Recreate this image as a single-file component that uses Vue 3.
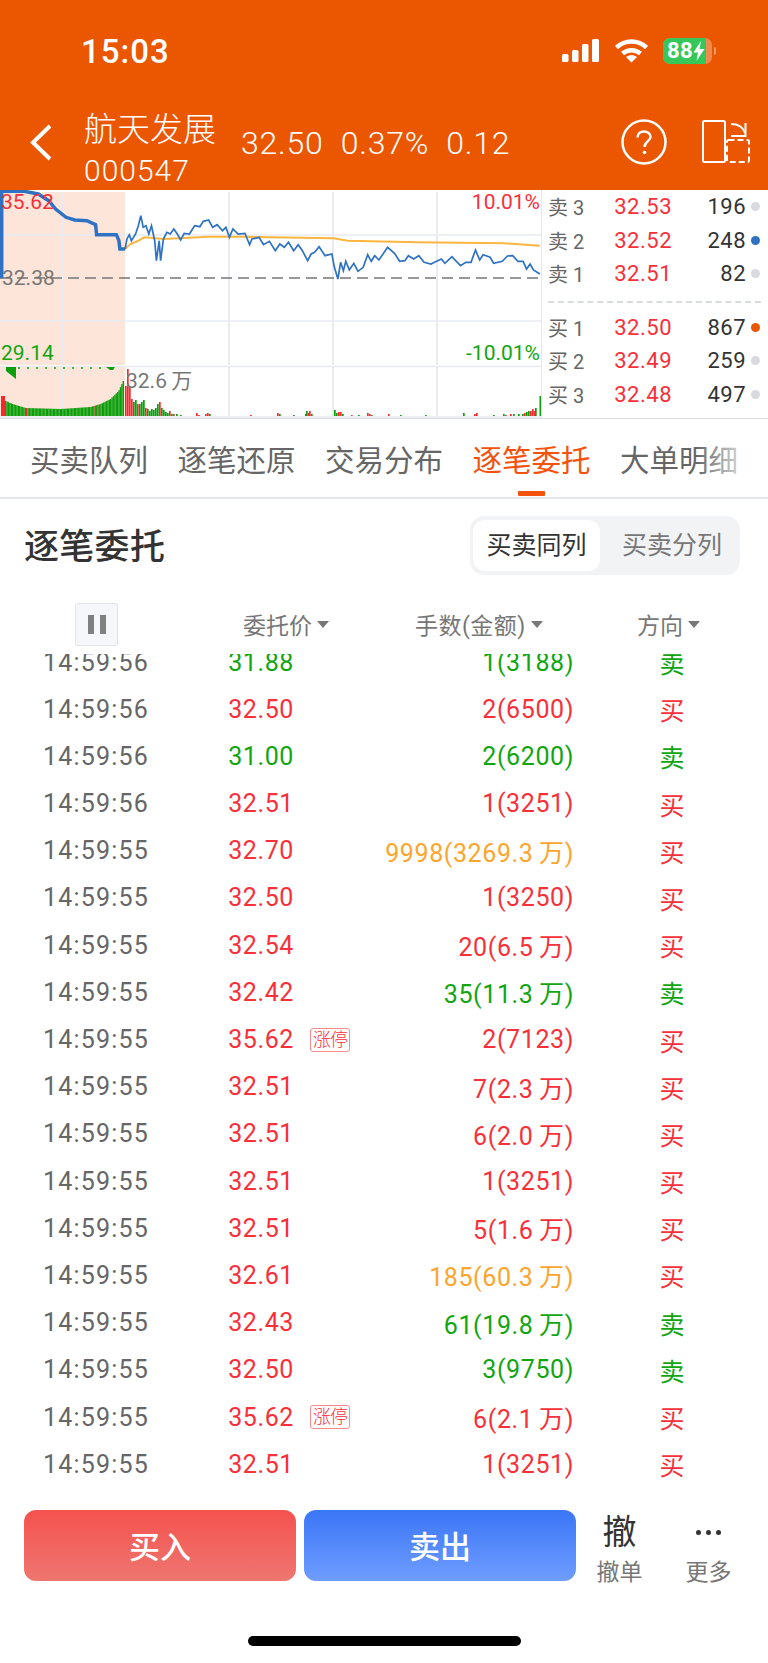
<template>
  <div class="page">
    <header class="top">
      <div class="status">
        <span class="clock">15:03</span>
        <div class="status-icons">
          <svg class="signal" width="38" height="24" viewBox="0 0 38 24">
            <rect x="0" y="15" width="6.5" height="8" rx="1.6" />
            <rect x="10" y="11" width="6.5" height="12" rx="1.6" />
            <rect x="20" y="5" width="6.5" height="18" rx="1.6" />
            <rect x="30" y="0" width="7" height="23" rx="1.6" />
          </svg>
          <svg class="wifi" width="33" height="24" viewBox="0 0 33 24">
            <path d="M1.5 8.5C10 0.500 23 0.500 31.500 8.500" />
            <path d="M7.500 14.500C12.500 10 20.500 10 25.500 14.500" />
            <path class="wifi-dot" d="M16.500 23.500L11 18C14 15.500 19 15.500 22 18Z" />
          </svg>
          <div class="battery">
            <div class="battery-fill"></div>
            <span class="battery-num">88</span>
            <svg class="bolt" width="12" height="20" viewBox="0 0 12 20">
              <path d="M8 0L0.500 11.500H5L3.500 20L11.500 8H6.500Z" />
            </svg>
            <i class="battery-nub"></i>
          </div>
        </div>
      </div>
      <div class="nav">
        <svg class="back" width="22" height="37" viewBox="0 0 22 37">
          <path d="M20 2L3 18.500L20 35" />
        </svg>
        <div class="stock">
          <div class="stock-name">航天发展</div>
          <div class="stock-code">000547</div>
        </div>
        <div class="quote">
          <span>32.50</span>
          <span>0.37%</span>
          <span>0.12</span>
        </div>
        <svg class="help" width="46" height="46" viewBox="0 0 46 46">
          <circle cx="23" cy="23" r="21.500" />
          <path d="M16.500 18.500C16.500 14.500 19.500 12.500 23 12.500C26.500 12.500 29.500 14.800 29.500 18C29.500 22 23.500 22.500 23.500 28" />
          <circle class="help-dot" cx="23.500" cy="33.500" r="1.800" />
        </svg>
        <svg class="switch" width="48" height="44" viewBox="0 0 48 44">
          <rect x="1" y="1" width="22" height="41" rx="1.500" />
          <path d="M29 4C36 4 41 7 43 13" />
          <path d="M29 16H43.500V3" />
          <rect class="dash" x="25" y="20" width="22" height="22" rx="1.500" />
        </svg>
      </div>
    </header>

    <section class="market">
      <div class="chart">
        <svg class="chart-svg" width="541" height="228" viewBox="0 191 541 228">
          <rect x="0" y="193" width="125" height="173" fill="#fde5d9" />
          <rect x="0" y="368" width="125" height="49" fill="#fde5d9" />
          <g stroke="#e8ebf2" stroke-width="1.500">
            <path d="M0 236H541M0 322H541M0 367.500H541M0 418H541" />
            <path stroke-width="2" d="M62.500 193V366M229 193V366M333 193V366M437 193V366M62.500 368V417M229 368V417M333 368V417M437 368V417" />
          </g>
          <rect
            v-for="(bar, i) in bars"
            :key="i"
            :x="bar.x"
            :y="417 - bar.h"
            :width="bar.w"
            :height="bar.h"
            :fill="bar.red ? '#f52a2e' : '#0b9f0b'"
          />
          <path d="M6 368H16V380L11 376L6 372Z" fill="#0b9f0b" />
          <path d="M18 369H104" stroke="#0b9f0b" stroke-width="1.500" stroke-dasharray="2 7" />
          <path d="M106 368H115L113 371H110Z" fill="#0b9f0b" />
          <path d="M0 279H541" stroke="#777" stroke-width="1.300" stroke-dasharray="11 6" />
          <polyline :points="avgLine" fill="none" stroke="#fcb63f" stroke-width="2" />
          <polyline :points="preLine" fill="none" stroke="#2f72c4" stroke-width="3.500" />
          <polyline :points="priceLine" fill="none" stroke="#2f72c4" stroke-width="1.700" />
        </svg>
        <span class="tag tag-high">35.62</span>
        <span class="tag tag-pct-high">10.01%</span>
        <span class="tag tag-base">32.38</span>
        <span class="tag tag-low">29.14</span>
        <span class="tag tag-pct-low">-10.01%</span>
        <span class="tag tag-vol">32.6&#8201;万</span>
      </div>

      <div class="book">
        <div v-for="row in sellRows" :key="row.label" class="book-row">
          <span class="book-label">{{ row.label }}</span>
          <span class="book-price">{{ row.price }}</span>
          <span class="book-vol">{{ row.vol }}</span>
          <i class="book-dot" :class="row.dot"></i>
        </div>
        <div class="book-line"></div>
        <div v-for="row in buyRows" :key="row.label" class="book-row">
          <span class="book-label">{{ row.label }}</span>
          <span class="book-price">{{ row.price }}</span>
          <span class="book-vol">{{ row.vol }}</span>
          <i class="book-dot" :class="row.dot"></i>
        </div>
      </div>
    </section>

    <nav class="tabs">
      <span v-for="tab in tabs" :key="tab" class="tab" :class="{ active: tab === '逐笔委托' }">{{ tab }}</span>
      <div class="tabs-fade"></div>
    </nav>

    <div class="section-head">
      <h2 class="section-title">逐笔委托</h2>
      <div class="segment">
        <span class="segment-item on">买卖同列</span>
        <span class="segment-item">买卖分列</span>
      </div>
    </div>

    <div class="list-head">
      <div class="pause"><i></i><i></i></div>
      <span class="head-price">委托价<b></b></span>
      <span class="head-qty">手数(金额)<b></b></span>
      <span class="head-dir">方向<b></b></span>
    </div>

    <div class="list">
      <div class="list-inner">
        <div v-for="(row, i) in rows" :key="i" class="row">
          <span class="cell-time">{{ row.time }}</span>
          <span class="cell-price" :class="row.price === '31.88' || row.price === '31.00' ? 'green' : 'red'">{{ row.price }}</span>
          <span class="cell-badge"><em v-if="row.price === '35.62'">涨停</em></span>
          <span class="cell-qty" :class="row.color">{{ row.qty.replace('万', '\u2009万') }}</span>
          <span class="cell-dir" :class="row.dir === '买' ? 'red' : 'green'">{{ row.dir }}</span>
        </div>
      </div>
    </div>

    <footer class="actions">
      <button class="btn btn-buy">买入</button>
      <button class="btn btn-sell">卖出</button>
      <div class="action action-cancel">
        <span class="action-main">撤</span>
        <span class="action-text">撤单</span>
      </div>
      <div class="action action-more">
        <span class="more-dots"><i></i><i></i><i></i></span>
        <span class="action-text">更多</span>
      </div>
    </footer>
    <div class="home-wrap"><div class="home"></div></div>
  </div>
</template>

<script setup>
// 坐标按截图放大后的像素记录，这里换算回页面坐标
const toPoints = (list) =>
  list.map(([x, y]) => `${(x / 2.877).toFixed(1)},${(185 + y / 3).toFixed(1)}`).join(' ')

const preLine = toPoints([
  [5, 283], [5, 22], [70, 22], [110, 30], [140, 50], [160, 75], [190, 100], [215, 108], [250, 110],
  [275, 122], [278, 152], [335, 152], [342, 170], [345, 195], [360, 195]
])

const priceLine = toPoints([
  [360, 195], [365, 165], [372, 152], [378, 170], [390, 150], [398, 125], [405, 95], [412, 130], [420, 125],
  [428, 150], [436, 125], [445, 170], [450, 230], [458, 170], [462, 230], [470, 165], [480, 145], [490, 150],
  [500, 135], [510, 150], [520, 168], [530, 148], [545, 150], [560, 125], [575, 128], [585, 112], [600, 108],
  [612, 130], [625, 122], [640, 140], [650, 130], [660, 160], [670, 135], [685, 150], [705, 148], [718, 182],
  [725, 165], [745, 160], [758, 182], [775, 172], [792, 200], [805, 180], [818, 190], [830, 175], [845, 200],
  [858, 182], [870, 200], [885, 230], [895, 210], [905, 205], [918, 188], [935, 215], [955, 210], [962, 250],
  [972, 285], [980, 235], [988, 260], [995, 232], [1005, 258], [1018, 238], [1030, 262], [1045, 250], [1058, 212],
  [1068, 232], [1078, 215], [1090, 228], [1115, 190], [1135, 208], [1150, 232], [1165, 230], [1175, 215],
  [1190, 225], [1205, 215], [1220, 235], [1240, 240], [1250, 235], [1270, 225], [1280, 238], [1300, 218],
  [1325, 245], [1340, 235], [1355, 235], [1368, 198], [1380, 228], [1390, 212], [1410, 220], [1420, 238],
  [1445, 232], [1460, 216], [1475, 215], [1490, 232], [1505, 232], [1515, 255], [1525, 240], [1535, 258], [1553, 270]
])

const avgLine = toPoints([
  [360, 195], [375, 180], [395, 172], [415, 160], [470, 165], [600, 158], [700, 158], [960, 163],
  [1000, 170], [1200, 175], [1450, 178], [1553, 185]
])

// 集合竞价段的成交量，外形是一个 U
const curve = [[5, 402], [12, 405], [25, 409], [60, 410], [90, 408], [100, 405], [110, 400], [118, 392], [124, 379]]
const curveTop = (x) => {
  for (let i = 1; i < curve.length; i++) {
    if (x <= curve[i][0]) {
      const [x0, y0] = curve[i - 1]
      const [x1, y1] = curve[i]
      return y0 + ((y1 - y0) * (x - x0)) / (x1 - x0)
    }
  }
  return 379
}

const bars = [{ x: 1, w: 4, h: 20, red: true }]
for (let x = 5; x < 124; x += 1.4) {
  const red = (x > 25 && x < 27) || (x > 94 && x < 96) || (x > 98.500 && x < 100)
  bars.push({ x, w: 1.400, h: 417 - curveTop(x), red })
}
const sessionBars = [
  [125, 30, 1], [127, 47, 1], [129, 30, 1], [131, 17, 1], [133, 14, 0], [135, 16, 0], [137, 12, 1], [139, 12, 0],
  [141, 14, 0], [143, 16, 0], [145, 8, 1], [147, 7, 0], [149, 5, 0], [151, 7, 0], [153, 6, 0], [155, 8, 0],
  [157, 12, 0], [159, 14, 1], [161, 8, 0], [163, 6, 0], [165, 4, 0], [167, 3, 0], [169, 5, 1], [171, 2, 0],
  [173, 2, 1], [176, 2, 0], [180, 1, 0], [196, 3, 1], [198, 1, 1], [205, 2, 1], [207, 3, 1], [209, 2, 0],
  [250, 1, 1], [277, 3, 1], [279, 2, 0], [293, 1, 0], [305, 2, 0], [306, 5, 0], [308, 3, 1], [309, 5, 1], [311, 2, 0],
  [334, 6, 0], [336, 3, 0], [338, 4, 1], [340, 4, 1], [342, 2, 0], [351, 1, 1], [358, 1, 0], [367, 3, 1], [369, 2, 1],
  [371, 1, 0], [388, 2, 1], [400, 1, 0], [425, 1, 0], [463, 3, 0], [474, 2, 1], [476, 3, 1], [493, 1, 0],
  [503, 2, 0], [505, 1, 1], [510, 2, 1], [513, 2, 0], [518, 2, 0], [522, 2, 0], [524, 3, 1], [526, 4, 0],
  [528, 5, 0], [530, 5, 1], [532, 7, 1], [534, 5, 1], [535, 8, 0], [539.500, 20, 0]
]
sessionBars.forEach(([x, h, red]) => bars.push({ x, w: 1.700, h, red: !!red }))

const sellRows = [
  { label: '卖 3', price: '32.53', vol: '196', dot: '' },
  { label: '卖 2', price: '32.52', vol: '248', dot: 'blue' },
  { label: '卖 1', price: '32.51', vol: '82', dot: '' }
]
const buyRows = [
  { label: '买 1', price: '32.50', vol: '867', dot: 'orange' },
  { label: '买 2', price: '32.49', vol: '259', dot: '' },
  { label: '买 3', price: '32.48', vol: '497', dot: '' }
]

const tabs = ['买卖队列', '逐笔还原', '交易分布', '逐笔委托', '大单明细']

const rows = [
  { time: '14:59:56', price: '31.88', qty: '1(3188)', color: 'green', dir: '卖' },
  { time: '14:59:56', price: '32.50', qty: '2(6500)', color: 'red', dir: '买' },
  { time: '14:59:56', price: '31.00', qty: '2(6200)', color: 'green', dir: '卖' },
  { time: '14:59:56', price: '32.51', qty: '1(3251)', color: 'red', dir: '买' },
  { time: '14:59:55', price: '32.70', qty: '9998(3269.3万)', color: 'orange', dir: '买' },
  { time: '14:59:55', price: '32.50', qty: '1(3250)', color: 'red', dir: '买' },
  { time: '14:59:55', price: '32.54', qty: '20(6.5万)', color: 'red', dir: '买' },
  { time: '14:59:55', price: '32.42', qty: '35(11.3万)', color: 'green', dir: '卖' },
  { time: '14:59:55', price: '35.62', qty: '2(7123)', color: 'red', dir: '买' },
  { time: '14:59:55', price: '32.51', qty: '7(2.3万)', color: 'red', dir: '买' },
  { time: '14:59:55', price: '32.51', qty: '6(2.0万)', color: 'red', dir: '买' },
  { time: '14:59:55', price: '32.51', qty: '1(3251)', color: 'red', dir: '买' },
  { time: '14:59:55', price: '32.51', qty: '5(1.6万)', color: 'red', dir: '买' },
  { time: '14:59:55', price: '32.61', qty: '185(60.3万)', color: 'orange', dir: '买' },
  { time: '14:59:55', price: '32.43', qty: '61(19.8万)', color: 'green', dir: '卖' },
  { time: '14:59:55', price: '32.50', qty: '3(9750)', color: 'green', dir: '卖' },
  { time: '14:59:55', price: '35.62', qty: '6(2.1万)', color: 'red', dir: '买' },
  { time: '14:59:55', price: '32.51', qty: '1(3251)', color: 'red', dir: '买' }
]
</script>

<style>
body {
  margin: 0;
  background: #fff;
}
</style>

<style scoped>
.page {
  width: 768px;
  height: 1663px;
  overflow: hidden;
  display: flex;
  flex-direction: column;
  background: #fff;
  font-family: Roboto, "Noto Sans CJK SC", sans-serif;
  color: #333;
}

/* 顶部 */
.top {
  height: 190px;
  background: #eb5600;
  color: #fff;
  flex-shrink: 0;
}
.status {
  height: 104px;
  box-sizing: border-box;
  padding: 33px 56px 0 81px;
  display: flex;
  justify-content: space-between;
}
.clock {
  font-size: 33px;
  line-height: 38px;
  font-weight: 500;
  letter-spacing: 1px;
}
.status-icons {
  display: flex;
  align-items: flex-start;
  padding-top: 5px;
}
.signal {
  fill: #fff;
  margin: 1px 15px 0 0;
}
.wifi {
  margin: 1px 15px 0 0;
  fill: none;
  stroke: #fff;
  stroke-width: 4.500;
}
.wifi-dot {
  fill: #fff;
  stroke: none;
}
.battery {
  position: relative;
  width: 49px;
  height: 26px;
  margin-top: 0;
  border-radius: 7px;
  overflow: visible;
  background: rgba(255, 255, 255, 0.3);
  display: flex;
  align-items: center;
  padding-left: 4px;
  box-sizing: border-box;
}
.battery-fill {
  position: absolute;
  left: 0;
  top: 0;
  bottom: 0;
  width: 43px;
  background: #35c759;
  border-radius: 7px 0 0 7px;
}
.battery-num {
  position: relative;
  font-size: 22px;
  font-weight: 700;
  letter-spacing: 0.5px;
  line-height: 26px;
}
.bolt {
  position: relative;
  fill: #fff;
  margin-left: 0;
}
.battery-nub {
  position: absolute;
  right: -4px;
  top: 9px;
  width: 2px;
  height: 8px;
  border-radius: 0 2px 2px 0;
  background: rgba(255, 255, 255, 0.4);
}

.nav {
  height: 86px;
  display: flex;
  align-items: flex-start;
  position: relative;
}
.back {
  fill: none;
  stroke: #fff;
  stroke-width: 4;
  margin: 20px 0 0 30px;
  flex-shrink: 0;
}
.stock {
  margin-left: 32px;
  width: 157px;
  flex-shrink: 0;
  font-weight: 300;
}
.stock-name {
  font-size: 33px;
  line-height: 44px;
  margin-top: 4px;
}
.stock-code {
  font-size: 30px;
  line-height: 34px;
  margin-top: 2px;
  letter-spacing: 1px;
}
.quote {
  display: flex;
  gap: 17px;
  font-size: 32px;
  font-weight: 300;
  line-height: 36px;
  margin-top: 21px;
  letter-spacing: 0.8px;
}
.help {
  position: absolute;
  left: 621px;
  top: 15px;
  fill: none;
  stroke: #fff;
  stroke-width: 2.500;
}
.help-dot {
  fill: #fff;
  stroke: none;
}
.switch {
  position: absolute;
  left: 702px;
  top: 16px;
  fill: none;
  stroke: #fff;
  stroke-width: 2;
}
.dash {
  stroke-dasharray: 6 3;
}

/* 分时图和五档 */
.market {
  height: 228px;
  display: flex;
  border-bottom: 1px solid #d9dce3;
  box-sizing: content-box;
  flex-shrink: 0;
}
.chart {
  width: 541px;
  position: relative;
  flex-shrink: 0;
}
.chart-svg {
  display: block;
}
.tag {
  position: absolute;
  font-size: 21px;
  line-height: 24px;
  white-space: nowrap;
}
.tag-high {
  left: 1px;
  top: 0;
  color: #f7303a;
}
.tag-pct-high {
  right: 1px;
  top: 0;
  color: #f7303a;
}
.tag-base {
  left: 2px;
  top: 76px;
  color: #777;
}
.tag-low {
  left: 1px;
  top: 151px;
  color: #11a511;
}
.tag-pct-low {
  right: 1px;
  top: 151px;
  color: #11a511;
}
.tag-vol {
  left: 126px;
  top: 179px;
  color: #777;
}
.book {
  flex: 1;
  border-left: 1px solid #e4e6ed;
  padding: 0 3px 0 6px;
  box-sizing: border-box;
}
.book-row {
  height: 33.500px;
  display: grid;
  grid-template-columns: 40px 84px 74px 18px;
  align-items: center;
  margin-bottom: 0;
}
.book-label {
  font-size: 20px;
  color: #666;
}
.book-price {
  font-size: 22px;
  color: #f7303a;
  text-align: right;
  letter-spacing: 0.5px;
}
.book-vol {
  font-size: 22px;
  color: #333;
  text-align: right;
  letter-spacing: 0.5px;
}
.book-dot {
  justify-self: center;
  width: 9px;
  height: 9px;
  border-radius: 50%;
  background: #d8dae0;
}
.book-dot.blue {
  background: #2f72c4;
}
.book-dot.orange {
  background: #eb5600;
}
.book-line {
  height: 0;
  margin: 10px 4px 8px 0;
  border-top: 2px dashed #d9dbe3;
}

/* 页签 */
.tabs {
  height: 78px;
  position: relative;
  display: flex;
  gap: 31px;
  padding-left: 30px;
  border-bottom: 2px solid #e4e6ed;
  flex-shrink: 0;
  overflow: hidden;
}
.tab {
  font-size: 29.500px;
  line-height: 84px;
  color: #666;
  white-space: nowrap;
  position: relative;
  width: 116.500px;
  flex-shrink: 0;
}
.tab.active {
  color: #f4520c;
}
.tab.active::after {
  content: "";
  position: absolute;
  left: 45px;
  bottom: 1px;
  width: 27px;
  height: 5px;
  border-radius: 1px;
  background: #f4520c;
}
.tabs-fade {
  position: absolute;
  right: 0;
  top: 0;
  bottom: 0;
  width: 72px;
  background: linear-gradient(to right, rgba(255, 255, 255, 0), #fff 85%);
}

.section-head {
  height: 93px;
  display: flex;
  align-items: center;
  justify-content: space-between;
  padding: 0 28px 0 24px;
  flex-shrink: 0;
}
.section-title {
  margin: -5px 0 0;
  font-size: 35px;
  font-weight: 500;
  color: #333;
  letter-spacing: 0.300px;
}
.segment {
  width: 270px;
  height: 59px;
  padding: 4px 3px;
  box-sizing: border-box;
  background: #f2f3f5;
  border-radius: 14px;
  display: flex;
}
.segment-item {
  width: 127px;
  font-size: 25px;
  line-height: 51px;
  text-align: center;
  color: #777;
}
.segment-item.on {
  background: #fff;
  color: #333;
  border-radius: 12px;
  margin-right: 12px;
}
.segment-item:not(.on) {
  width: 120px;
}

.list-head {
  height: 54px;
  margin-top: 5px;
  margin-bottom: 3px;
  display: flex;
  align-items: center;
  font-size: 23px;
  color: #777;
  flex-shrink: 0;
  position: relative;
}
.pause {
  width: 43px;
  height: 43px;
  margin-left: 75px;
  box-sizing: border-box;
  border: 1px solid #e0e3ea;
  border-radius: 3px;
  background: #f6f7fa;
  display: flex;
  align-items: center;
  justify-content: center;
  gap: 6px;
}
.pause i {
  width: 6px;
  height: 19px;
  background: #808080;
}
.list-head span {
  white-space: nowrap;
  display: flex;
  align-items: center;
}
.head-price {
  margin-left: 125px;
}
.head-qty {
  margin-left: 86px;
  letter-spacing: 0.5px;
}
.head-dir {
  margin-left: 94px;
}
.list-head b {
  width: 0;
  height: 0;
  margin-left: 5px;
  border-left: 6px solid transparent;
  border-right: 6px solid transparent;
  border-top: 7px solid #777;
}

.list {
  height: 836px;
  overflow: hidden;
  flex-shrink: 0;
}
.list-inner {
  margin-top: -15.600px;
}
.row {
  height: 47.200px;
  display: grid;
  grid-template-columns: 200px 94px 16px 40px 224px 26px 144px;
  align-items: center;
  font-size: 25px;
  white-space: nowrap;
}
.cell-time {
  grid-column: 1;
  padding-left: 43px;
  color: #666;
  letter-spacing: 1.200px;
}
.cell-price {
  grid-column: 2;
  text-align: right;
  letter-spacing: 0.600px;
}
.cell-badge {
  grid-column: 4;
  display: flex;
}
.cell-badge em {
  font-style: normal;
  font-size: 18px;
  line-height: 22px;
  width: 38px;
  text-align: center;
  color: #f7303a;
  border: 1px solid #f78a8f;
  border-radius: 3px;
  white-space: nowrap;
  letter-spacing: -1px;
  font-weight: 300;
}
.cell-qty {
  grid-column: 5;
  text-align: right;
  letter-spacing: 0.600px;
}
.cell-dir {
  grid-column: 7;
  text-align: center;
}
.red {
  color: #f7303a;
}
.green {
  color: #11a511;
}
.orange {
  color: #fca52c;
}

/* 底部 */
.actions {
  height: 71px;
  margin-top: 20px;
  padding-left: 24px;
  display: flex;
  flex-shrink: 0;
}
.btn {
  width: 272px;
  height: 71px;
  border: none;
  border-radius: 12px;
  color: #fff;
  font-family: inherit;
  font-size: 31px;
  font-weight: 500;
  padding: 0 0 2px;
}
.btn-buy {
  background: linear-gradient(#f5524e, #ee7670);
  margin-right: 8px;
}
.btn-sell {
  background: linear-gradient(#3b76f6, #6f9dff);
}
.action {
  display: flex;
  flex-direction: column;
  align-items: center;
  width: 47px;
}
.action-cancel {
  margin-left: 20px;
}
.action-more {
  margin-left: 42px;
}
.action-main {
  font-size: 34px;
  line-height: 44px;
  height: 44px;
  flex-shrink: 0;
}
.action-text {
  font-size: 23px;
  line-height: 32px;
  color: #777;
  margin-top: 3px;
  white-space: nowrap;
  flex-shrink: 0;
}
.more-dots {
  height: 44px;
  display: flex;
  gap: 5px;
  align-items: center;
  flex-shrink: 0;
}
.more-dots i {
  width: 5px;
  height: 5px;
  border-radius: 50%;
  background: #333;
}
.home-wrap {
  flex: 1;
  display: flex;
  justify-content: center;
  padding-top: 55px;
  box-sizing: border-box;
}
.home {
  width: 273px;
  height: 10px;
  border-radius: 5px;
  background: #000;
}
</style>
